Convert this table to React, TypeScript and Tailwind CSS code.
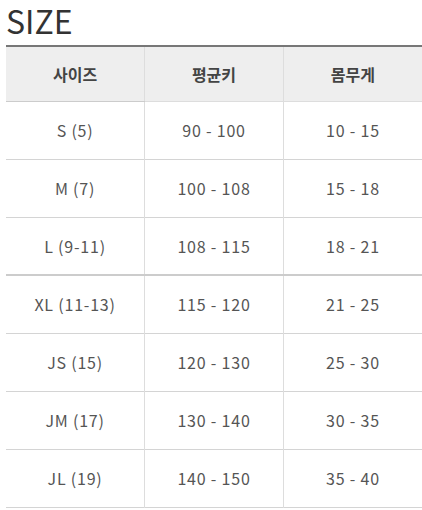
const rows = [
  ["S (5)", "90 - 100", "10 - 15"],
  ["M (7)", "100 - 108", "15 - 18"],
  ["L (9-11)", "108 - 115", "18 - 21"],
  ["XL (11-13)", "115 - 120", "21 - 25"],
  ["JS (15)", "120 - 130", "25 - 30"],
  ["JM (17)", "130 - 140", "30 - 35"],
  ["JL (19)", "140 - 150", "35 - 40"],
];

export default function App() {
  return (
    <div
      className="bg-white w-[422px] h-[510px] overflow-hidden"
      style={{ fontFamily: '"Noto Sans CJK KR", "Noto Sans", sans-serif' }}
    >
      <h1 className="-mt-[4px] pl-[6px] text-[32px] leading-[48px] text-[#333] font-normal">SIZE</h1>
      <table className="ml-[6px] mt-[1px] w-[416px] border-collapse table-fixed border-t-2 border-t-[#777]">
        <thead>
          <tr className="bg-[#eeeeee] h-[55px]">
            <th className="text-[16px] font-bold text-[#444] border-b border-[#ccc]">사이즈</th>
            <th className="text-[16px] font-bold text-[#444] border-b border-l border-[#ddd]">평균키</th>
            <th className="text-[16px] font-bold text-[#444] border-b border-l border-[#ddd]">몸무게</th>
          </tr>
        </thead>
        <tbody>
          {rows.map((r, i) => (
            <tr
              key={r[0]}
              className={
                i === 2
                  ? "h-[58px] border-b-2 border-[#ccc]"
                  : "h-[58px] border-b border-[#d4d4d4]"
              }
            >
              {r.map((c, j) => (
                <td
                  key={j}
                  className={
                    j === 0
                      ? "text-center text-[16px] tracking-[0.8px] text-[#555]"
                      : "text-center text-[16px] tracking-[0.8px] text-[#555] border-l border-[#ddd]"
                  }
                >
                  {c}
                </td>
              ))}
            </tr>
          ))}
        </tbody>
      </table>
    </div>
  );
}
